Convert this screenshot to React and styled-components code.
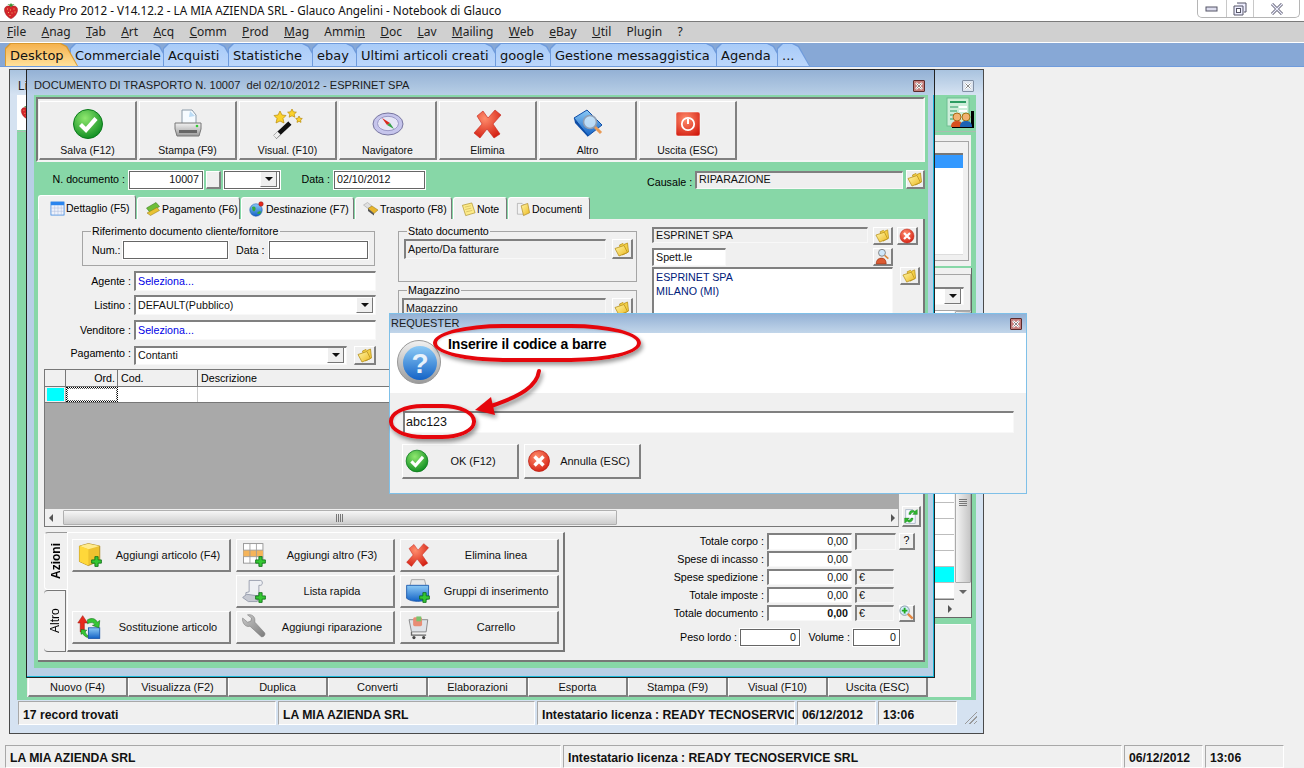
import React from "react";
import styled, { createGlobalStyle } from "styled-components";

const Global = createGlobalStyle`
  html, body { margin: 0; padding: 0; background: #f0f0f0; overflow: hidden; }
  * { box-sizing: border-box; }
`;

const Screen = styled.div`
  position: relative; width: 1304px; height: 768px; display: flex; flex-direction: column;
  overflow: hidden; background: #f0f0f0; color: #000;
  font-family: "Liberation Sans", Arial, sans-serif; font-size: 10.7px; line-height: 1;
`;
const Defs = styled.svg`position: absolute; width: 0; height: 0;`;
const Ico = styled.svg`flex: none; display: block;`;

/* ---------- icons ---------- */
const Gradients = () => (
  <Defs aria-hidden="true">
    <defs>
      <radialGradient id="gGreen" cx="40%" cy="30%" r="75%"><stop offset="0" stopColor="#8fe86f" /><stop offset="1" stopColor="#0a8a1e" /></radialGradient>
      <radialGradient id="gRed" cx="40%" cy="30%" r="80%"><stop offset="0" stopColor="#ff8d6c" /><stop offset="1" stopColor="#d21a0e" /></radialGradient>
      <linearGradient id="gYel" x1="0" y1="0" x2="1" y2="1"><stop offset="0" stopColor="#fff6a8" /><stop offset="1" stopColor="#edb920" /></linearGradient>
      <linearGradient id="gBlue" x1="0" y1="0" x2="0" y2="1"><stop offset="0" stopColor="#8ccaf6" /><stop offset="1" stopColor="#1463c6" /></linearGradient>
      <linearGradient id="gGray" x1="0" y1="0" x2="0" y2="1"><stop offset="0" stopColor="#f2f2f2" /><stop offset="1" stopColor="#9a9a9a" /></linearGradient>
      <linearGradient id="gSteel" x1="0" y1="0" x2="1" y2="1"><stop offset="0" stopColor="#c9c9c9" /><stop offset="1" stopColor="#7c7c7c" /></linearGradient>
    </defs>
  </Defs>
);
const I = ({ s = 32, children }) => <Ico width={s} height={s} viewBox="0 0 32 32">{children}</Ico>;
const Plus = ({ x = 20, y = 20 }) => (
  <path transform={`translate(${x} ${y})`} d="M4 0h4v4h4v4H8v4H4V8H0V4h4z" fill="#35c733" stroke="#0c6a16" strokeWidth="1" />
);
const CheckIcon = ({ s }) => (
  <I s={s}><circle cx="16" cy="16" r="14.5" fill="url(#gGreen)" stroke="#0b7a1c" /><path d="M8.5 16.5l5.5 5.5 10-11.5" fill="none" stroke="#fff" strokeWidth="4.2" /></I>
);
const PrinterIcon = () => (
  <I>
    <path d="M10 2h10l4 5v11H10z" fill="#f6fbff" stroke="#8a9aa8" />
    <path d="M18 3l5 5-6 1z" fill="#bcdcf5" />
    <path d="M3 15h26v6l-2 7H5l-2-7z" fill="url(#gGray)" stroke="#777" />
    <path d="M7 22h18v3H7z" fill="#666" />
    <circle cx="25" cy="18" r="1.3" fill="#3c3" />
  </I>
);
const WandIcon = () => (
  <I>
    <path d="M3 29L18 15" stroke="#111" strokeWidth="4.5" />
    <path d="M3 29l4-4" stroke="#eee" strokeWidth="4.5" />
    <path d="M18 15l3-3" stroke="#eee" strokeWidth="4.5" />
    <path d="M8 3l2 4 4 .5-3 3 1 4.5-4-2-4 2 1-4.5-3-3 4-.5z" fill="#fbd22b" stroke="#b78a0a" strokeWidth=".7" />
    <path d="M20 1l1.4 2.8 3 .4-2.2 2 .6 3-2.8-1.4-2.8 1.4.6-3-2.2-2 3-.4z" fill="#fbd22b" stroke="#b78a0a" strokeWidth=".7" />
    <path d="M27 8l1 2.2 2.3.3-1.7 1.6.4 2.3-2-1.1-2 1.1.4-2.3-1.7-1.6 2.3-.3z" fill="#fbd22b" stroke="#b78a0a" strokeWidth=".7" />
  </I>
);
const CompassIcon = () => (
  <I>
    <ellipse cx="16" cy="16" rx="15" ry="11" fill="#c6c5ec" stroke="#77759f" />
    <ellipse cx="16" cy="15.5" rx="10.5" ry="7.2" fill="#e6e6f6" stroke="#9b99c6" />
    <path d="M10 10l8 5-3 2z" fill="#d9281c" /><path d="M22 21l-7-4 3-2z" fill="#35a04a" />
  </I>
);
const BigXIcon = ({ s }) => (
  <I s={s}><path d="M5 8l6-5 5 7 7-8 6 5-8 9 7 10-6 4-7-9-7 9-6-5 8-9z" fill="url(#gRed)" stroke="#c5241a" strokeWidth=".6" /></I>
);
const BookIcon = () => (
  <I>
    <path d="M2 10L15 2l15 15-14 11z" fill="url(#gBlue)" stroke="#0e4da6" />
    <path d="M2 10l1 5 13 14 0-2z" fill="#0e4da6" />
    <circle cx="18" cy="14" r="6.5" fill="#cfe7fa" fillOpacity=".85" stroke="#8e9eb4" strokeWidth="1.6" />
    <path d="M23 19l6 6" stroke="#e99a55" strokeWidth="3" />
  </I>
);
const PowerIcon = () => (
  <I>
    <rect x="4" y="4" width="24" height="24" rx="2" fill="url(#gRed)" stroke="#fff" strokeWidth=".5" />
    <circle cx="16" cy="16" r="6.2" fill="none" stroke="#fff" strokeWidth="1.8" />
    <path d="M16 11v5" stroke="#fff" strokeWidth="2" />
  </I>
);
const FolderIcon = ({ s = 18 }) => (
  <I s={s}>
    <path d="M11 8l7-3 2 2 7-3 2 18-12 6z" fill="#f3cf45" stroke="#b8901c" strokeWidth="1.6" />
    <path d="M2 15l18-6 7 14-17 7z" fill="url(#gYel)" stroke="#b8901c" strokeWidth="1.6" />
  </I>
);
const RedXIcon = ({ s = 18 }) => (
  <I s={s}>
    <circle cx="16" cy="16" r="14" fill="url(#gRed)" stroke="#b91c10" />
    <path d="M10 10l12 12M22 10L10 22" stroke="#fff" strokeWidth="4.5" />
  </I>
);
const PersonSearchIcon = () => (
  <I s={17}>
    <circle cx="15" cy="9" r="6.5" fill="#cfe7fa" stroke="#777" strokeWidth="1.6" />
    <path d="M20 14l7 6" stroke="#d98a3e" strokeWidth="3" />
    <path d="M4 30c0-7 4-11 10-11s9 4 9 11z" fill="#dc5b32" stroke="#8a2b11" />
  </I>
);
const QuestionIcon = () => (
  <Ico width="44" height="44" viewBox="0 0 44 44">
    <circle cx="22" cy="22" r="21.5" fill="url(#gGray)" stroke="#999" />
    <circle cx="23" cy="23" r="17" fill="url(#gBlue)" />
    <text x="23" y="33" textAnchor="middle" fontFamily="Liberation Sans" fontWeight="700" fontSize="28" fill="#e8f2fb">?</text>
  </Ico>
);
const CubeIcon = ({ s }) => (
  <I s={s}>
    <path d="M14 2l14 3v18l-14 6L3 24V5z" fill="#eec22f" stroke="#a87f10" />
    <path d="M3 5l11 4 14-4-14-3z" fill="#ffeb8c" />
    <path d="M14 9v20L3 24V5z" fill="#ffd83a" />
    <Plus x={18} y={18} />
  </I>
);
const TableIcon = ({ s }) => (
  <I s={s}>
    <rect x="3" y="2" width="24" height="24" fill="#fff" stroke="#888" />
    <rect x="3" y="10" width="24" height="8" fill="#f5b45a" />
    <path d="M3 10h24M3 18h24M11 2v24M19 2v24" stroke="#999" />
    <Plus x={18} y={18} />
  </I>
);
const ScrollIcon = ({ s }) => (
  <I s={s}>
    <path d="M10 3h14c3 0 3 6 0 6l-2 0 0 13H6l0-4 4-1z" fill="#eef0f4" stroke="#8d93a4" />
    <path d="M2 24l5-4 14 2-1 7H9z" fill="#c6c9d2" stroke="#8d93a4" />
    <Plus x={18} y={18} />
  </I>
);
const BucketIcon = ({ s }) => (
  <I s={s}>
    <path d="M8 2l16 0 2 8H6z" fill="#e8e8e8" stroke="#999" />
    <path d="M2 9h27v16c-6 5-21 5-27 0z" fill="url(#gBlue)" stroke="#0e4da6" />
    <Plus x={18} y={18} />
  </I>
);
const SwapIcon = ({ s }) => (
  <I s={s}>
    <path d="M7 2l6 9H9v11H4V11H1z" fill="#e8291c" stroke="#a5180f" strokeWidth=".7" />
    <rect x="14" y="17" width="14" height="13" fill="url(#gBlue)" stroke="#0e4da6" />
    <path d="M13 7c6-3 10-1 12 3l3-2-1 9-8-3 3-1c-2-3-5-3-9-1z" fill="#35c733" stroke="#0c6a16" strokeWidth=".7" />
    <path d="M5 19l7 1-2 2c1 3 2 3 3 4v3c-3-1-5-3-6-5l-2 1z" fill="#35c733" stroke="#0c6a16" strokeWidth=".7" />
  </I>
);
const WrenchIcon = ({ s }) => (
  <I s={s}>
    <path d="M2 5l6 5 4-1 1-4-5-4c5-1 9 2 9 6l0 3 12 13c2 3-3 7-5 4L11 15c-5 2-10-4-9-10z" fill="url(#gSteel)" stroke="#777" strokeWidth=".7" />
  </I>
);
const CartIcon = ({ s }) => (
  <I s={s}>
    <path d="M5 7h23l-2 15H8z" fill="#dfe3e8" stroke="#777" />
    <rect x="10" y="4" width="11" height="11" rx="2" fill="#e88d75" />
    <path d="M14 3h6v6h-6z" fill="#7cc36d" />
    <path d="M8 22v4h18" fill="none" stroke="#666" strokeWidth="1.6" />
    <circle cx="11" cy="29" r="2" fill="#444" /><circle cx="23" cy="29" r="2" fill="#444" />
  </I>
);
const RefreshIcon = () => (
  <I s={17}>
    <path d="M5 3h13l5 5v21H5z" fill="#f7fbff" stroke="#7b8fa9" />
    <path d="M27 3v9h-9l3-3c-3-2-5 0-6 3h-4c0-7 7-10 11-6z" fill="#2fb52f" stroke="#0c6a16" strokeWidth=".6" />
    <path d="M3 28v-9h9l-3 3c3 2 5 0 6-3h4c0 7-7 10-11 6z" fill="#2fb52f" stroke="#0c6a16" strokeWidth=".6" />
  </I>
);
const ZoomPlusIcon = () => (
  <I s={15}>
    <circle cx="12" cy="12" r="10" fill="#d4ecfb" stroke="#8596a5" strokeWidth="2" />
    <path d="M6 12h12M12 6v12" stroke="#1eaa22" strokeWidth="4" />
    <path d="M19 19l10 10" stroke="#e5873f" strokeWidth="5" />
  </I>
);
const StrawberryIcon = ({ s = 16 }) => (
  <I s={s}>
    <path d="M16 7c8-3 14 1 13 8-1 8-8 15-13 16C11 30 4 23 3 15 2 8 8 4 16 7z" fill="#d4252a" stroke="#8d1216" />
    <path d="M16 8L9 2l5 1 2-3 2 3 5-1z" fill="#3d8f30" />
    <path d="M9 12h.1M15 14h.1M22 12h.1M11 19h.1M18 20h.1M24 18h.1M14 25h.1" stroke="#f6d27a" strokeWidth="2" strokeLinecap="round" />
  </I>
);
const CalendarIcon = () => (
  <I s={15}>
    <rect x="2" y="2" width="28" height="28" fill="#eef2fb" stroke="#2b7de0" strokeWidth="1.5" />
    <rect x="2" y="2" width="28" height="7" fill="#2b85ee" />
    <path d="M2 15h28M2 22h28M10 9v21M17 9v21M24 9v21" stroke="#a9b6d8" />
  </I>
);
const MoneyIcon = () => (
  <I s={16}>
    <path d="M3 14L22 3l7 8-19 12z" fill="#6fbe3a" stroke="#2d6e14" />
    <path d="M4 24l20-11 5 6-18 10z" fill="#e8c233" stroke="#8e7410" />
  </I>
);
const GlobeIcon = () => (
  <I s={16}>
    <circle cx="14" cy="18" r="12.5" fill="url(#gBlue)" stroke="#0e4da6" />
    <path d="M6 12c5-3 8 0 7 5s-5 4-6 1zM16 24c3-4 7-4 9-2-2 4-6 6-9 2z" fill="#34a83c" />
    <circle cx="24" cy="6" r="4.5" fill="#e8291c" stroke="#8d1216" />
  </I>
);
const TruckIcon = () => (
  <I s={16}>
    <path d="M1 8l8-5 9 7-8 5z" fill="#e0e0e0" stroke="#999" />
    <path d="M10 15l8-5 12 8-8 7z" fill="#e8b52c" stroke="#8e7410" />
    <path d="M10 15l12 10v4L10 20z" fill="#555" />
  </I>
);
const NoteIcon = () => (
  <I s={15}>
    <path d="M3 7l20-5 7 21-20 6z" fill="#fdeb8a" stroke="#a98d23" strokeWidth="1.4" />
    <path d="M8 11l13-3M9 16l13-3M11 21l13-3" stroke="#b99f44" />
  </I>
);
const FoldersIcon = () => (
  <I s={15}>
    <path d="M3 3h10l3 3v20H3z" fill="#f2f2f2" stroke="#888" />
    <path d="M11 8l14-5 4 20-13 6z" fill="url(#gYel)" stroke="#a9821a" strokeWidth="1.4" />
  </I>
);
const PeopleIcon = () => (
  <Ico width="29" height="32" viewBox="0 0 29 32">
    <rect x="1" y="1" width="22" height="28" fill="#cdeeda" stroke="#6fbe91" />
    <path d="M4 5h16" stroke="#2b9b62" strokeWidth="2" />
    <path d="M4 10h8M4 14h7M4 18h4M4 22h3" stroke="#2b9b62" />
    <path d="M13 10h8M13 14h8" stroke="#fff" strokeWidth="2" />
    <path d="M25 14h3v17H6v-1h19z" fill="#000" />
    <circle cx="11" cy="20" r="4" fill="#f2b271" stroke="#a86a18" />
    <path d="M5 30c0-5 3-6 6-6s6 1 6 6z" fill="#d8501f" />
    <circle cx="20" cy="20" r="4" fill="#f2b271" stroke="#9c7716" />
    <path d="M14 30c0-5 3-6 6-6s6 1 6 6z" fill="#1c63b4" />
  </Ico>
);

/* ---------- window frame pieces ---------- */
const TitleBar = styled.header`
  height: 21px; flex: none; background: #fff; display: flex; justify-content: space-between;
  padding: 0 4px 0 3px; font-family: "Noto Sans", sans-serif; font-size: 11.7px; color: #111;
`;
const TitleLeft = styled.div`display: flex; align-items: center; gap: 3px; height: 21px; white-space: pre;`;
const WinControls = styled.div`
  display: flex; height: 18px; border: 1px solid #b5b5b5; border-top: 0; border-radius: 0 0 5px 5px;
`;
const WinControl = styled.div`
  width: ${p => p.$w}px; display: flex; align-items: center; justify-content: center;
  & + & { border-left: 1px solid #c8c8c8; }
`;
const MenuBar = styled.nav`
  height: 21px; flex: none; display: flex; align-items: center; gap: 15.3px; padding: 0 0 0 7px;
  background: #d0d0d0; border-top: 1px solid #7a7a7a; font-family: "Noto Sans", sans-serif; font-size: 12px; color: #222;
`;
const TabBar = styled.div`
  height: 25px; flex: none; display: flex; align-items: flex-end; padding-left: 5px;
  background: #87a8d6; border-top: 1px solid #fff; border-bottom: 1px solid #6f9bdc;
`;
const TopTab = styled.div`
  position: relative; width: ${p => p.$w}px; margin-right: -8px; height: 23px; padding: 6px 0 0 5px;
  font-family: "DejaVu Sans", sans-serif; font-size: 13px; color: #111; white-space: nowrap; z-index: ${p => p.$active ? 2 : 1};
  clip-path: polygon(0 100%, 0 5px, 5px 0, calc(100% - 17px) 0, calc(100% - 11px) 3px, 100% 100%);
  background: ${p => p.$active ? "#d99a30" : "#6f9bdc"};
  & > span { position: relative; }
  &::before {
    content: ""; position: absolute; inset: 1px 1px 0 1px;
    clip-path: polygon(0 100%, 0 5px, 5px 0, calc(100% - 17px) 0, calc(100% - 11px) 3px, 100% 100%);
    background: ${p => p.$active ? "linear-gradient(#f5b24e, #ffe09a)" : "linear-gradient(#a8cbf8, #bcd6fb)"};
  }
`;
const Desktop = styled.main`position: relative; flex: 1; min-height: 0;`;
const FooterBar = styled.footer`
  height: 23px; flex: none; display: flex; padding-left: 5px; gap: 2px;
`;
const StatusCell = styled.div`
  width: ${p => p.$w}px; flex: none; padding: 6px 0 0 4px; background: #f0f0f0; white-space: nowrap; overflow: hidden;
  border-style: solid; border-width: 1px; border-color: #a8a8a8 #fff #fff #a8a8a8; font-weight: 700; font-size: 12.2px; color: #111;
`;

/* ---------- generic window ---------- */
const Window = styled.section`
  position: absolute; left: ${p => p.$x}px; top: ${p => p.$y}px; width: ${p => p.$w}px; height: ${p => p.$h}px;
  display: flex; flex-direction: column; background: ${p => p.$bg};
  border: 1px solid ${p => p.$line};
  ${p => p.$glow ? "box-shadow: inset -1px -1px 0 #19b6d8;" : ""}
`;
const WinTitle = styled.div`
  height: ${p => p.$h || 25}px; flex: none; display: flex; align-items: center; justify-content: space-between;
  padding: ${p => p.$pt ?? 6}px ${p => p.$pr || 9}px 0 ${p => p.$pl || 7}px;
  background: linear-gradient(${p => p.$from}, ${p => p.$to}); font-size: ${p => p.$fs || 11.1}px; color: #1c1c1c; white-space: pre;
`;
const CloseBtn = styled.div`
  width: ${p => p.$s || 12}px; height: ${p => p.$s || 12}px; display: flex; align-items: center; justify-content: center;
  background: ${p => p.$red ? "#c47d7a" : "#dbe3ee"}; border: 1px solid ${p => p.$red ? "#5c2b2b" : "#8290a5"}; border-radius: 1px;
`;
const CloseGlyph = () => (
  <Ico width="8" height="8" viewBox="0 0 8 8"><path d="M1 1l6 6M7 1L1 7" stroke="#fff" strokeWidth="2.4" /><path d="M1.5 1.5l5 5M6.5 1.5l-5 5" stroke="#555" strokeWidth=".7" /></Ico>
);

/* ---------- back window ---------- */
const BackBody = styled.div`
  height: 605px; margin: 0 7px; flex: none; background: #87d7a7; display: flex; flex-direction: column;
`;
const BackTool = styled.div`
  height: 37px; flex: none; display: flex; justify-content: space-between; align-items: flex-start; border-bottom: 1px solid #a9bdb0; 
`;
const BackLogo = styled.div`width: 40px; height: 35px; background: #fff; padding: 10px 0 0 3px;`;
const BackToolIcon = styled.div`margin: 2px 1px 0 0;`;
const UpperPanel = styled.div`
  margin: 3px 5px 0 12px; height: 131px; flex: none; background: #f0f0f0; padding: 6px 2px 5px 5px;
`;
const UpperFrame = styled.div`height: 100%; border: 1px solid #a5a5a5; padding: 11px 5px 5px 4px;`;
const UpperList = styled.div`height: 100%; background: #fff; border-top: 2px solid #777; border-bottom: 1px solid #ddd;`;
const SelectedRow = styled.div`height: 13px; background: #3399ff;`;
const LowerPanel = styled.div`
  margin: 2px 4px 0 10px; height: 350px; flex: none; background: #f0f0f0; display: flex; flex-direction: column;
  border-right: 1px solid #666; border-bottom: 1px solid #666;
`;
const FilterFrame = styled.div`
  margin-top: 6px; height: 37px; flex: none; border: 1px solid #a5a5a5; display: flex; justify-content: flex-end; align-items: flex-start; padding: 12px 6px 0 0;
`;
const ListWrap = styled.div`flex: 1; display: flex; min-height: 0; gap: 1px;`;
const ListRows = styled.div`flex: 1; background: #fff; border-bottom: 2px solid #777;`;
const ListRow = styled.div`height: 16px; border-bottom: 1px solid #bdbdbd; background: ${p => p.$on ? "#00ffff" : "#fff"};`;
const VScroll = styled.div`width: 16px; flex: none; display: flex; flex-direction: column; background: #f0f0f0;`;
const VThumb = styled.div`
  flex: 1; background: linear-gradient(90deg, #f4f4f4, #c6c6c6); border: 1px solid #aaa; border-radius: 1px;
  display: flex; align-items: flex-end; justify-content: center; padding-bottom: 75px;
`;
const Grip = styled.div`width: ${p => p.$w}px; height: ${p => p.$h}px; background: repeating-linear-gradient(${p => p.$dir}, #777 0 1px, transparent 1px 2px);`;
const ArrowBox = styled.div`
  height: ${p => p.$h || 17}px; flex: none; display: flex; align-items: center; justify-content: center; 
`;
const Tri = styled.div`
  width: 0; height: 0; border-style: solid; border-color: transparent;
  ${p => p.$dir === "down" && `border-width: 4px 4px 0 4px; border-top-color: ${p.$c || "#111"};`}
  ${p => p.$dir === "right" && `border-width: 4px 0 4px 4px; border-left-color: ${p.$c || "#555"};`}
  ${p => p.$dir === "left" && `border-width: 4px 4px 4px 0; border-right-color: ${p.$c || "#555"};`}
`;
const HScrollRow = styled.div`height: 17px; flex: none; display: flex; justify-content: flex-end; padding-right: 19px; align-items: center;`;
const BottomPanel = styled.div`
  margin: 6px 5px 0 10px; height: 73px; flex: none; background: #f0f0f0; border-top: 1px solid #fafafa; border-right: 1px solid #fafafa;
  display: flex; align-items: flex-end; padding-left: 1px;
`;
const CmdBtn = styled.button`
  width: 100px; height: 20px; padding: 2px 0 0; background: #efefef; font: inherit; font-size: 11px; color: #111; text-align: center;
  border-style: solid; border-width: 1px 2px 2px 1px; border-color: #fff #808080 #808080 #fff;
`;
const BackStatus = styled.div`display: flex; gap: 2px; margin: 1px 0 0 8px;`;
const BackCell = styled(StatusCell)`
  height: 24px; padding: 7px 0 0 4px;
`;
const GripCorner = styled.div`
  width: 14px; height: 14px; margin: 9px 0 0 4px;
  background: repeating-linear-gradient(135deg, transparent 0 2px, #999 2px 3px);
  clip-path: polygon(100% 0, 100% 100%, 0 100%);
`;

/* ---------- form atoms ---------- */
const Sunken = styled.div`
  width: ${p => p.$w}px; height: ${p => p.$h || 18}px; flex: none; margin-left: ${p => p.$ml || 0}px;
  background: ${p => p.$gray ? "#efefef" : "#fff"}; color: ${p => p.$blue ? "#0000e6" : "#111"};
  display: flex; align-items: center; justify-content: ${p => p.$right ? "flex-end" : "flex-start"};
  padding: 0 ${p => p.$right ? 3 : 2}px 1px ${p => p.$right ? 0 : 2}px; font-weight: ${p => p.$bold ? 700 : 400}; white-space: nowrap; overflow: hidden;
  border-style: solid; border-width: 2px 1px 1px 2px; border-color: #808080 #f8f8f8 #f8f8f8 #808080;
`;
const Thin = styled(Sunken)`
  border-width: 1px; border-color: #666; outline: 1px solid #fff; outline-offset: 0;
`;
const AddressBox = styled(Sunken)`
  display: block; padding-top: 1px; line-height: 14px; color: #00207a;
`;
const Raised = styled.div`
  width: ${p => p.$w}px; height: ${p => p.$h || 18}px; flex: none; margin-left: ${p => p.$ml || 0}px;
  background: #efefef; display: flex; align-items: center; justify-content: center; 
  border-style: solid; border-width: 1px 2px 2px 1px; border-color: #fff #808080 #808080 #fff;
`;
const ComboBtn = styled(Raised)`
  margin-left: auto; width: 17px; height: 16px; border-width: 1px; border-color: #fff #777 #777 #fff;
`;
const Label = styled.span`
  width: ${p => p.$w}px; flex: none; margin-left: ${p => p.$ml || 0}px; text-align: ${p => p.$left ? "left" : "right"}; white-space: nowrap;
  padding-top: ${p => p.$pt || 0}px; padding-bottom: ${p => p.$pb || 0}px;
`;

/* ---------- front window ---------- */
const FrontBody = styled.div`
  height: 573px; margin: 0 6px 0 7px; flex: none; background: #87d7a7; padding: 2px 3px 0 2px; display: flex; flex-direction: column;
`;
const Toolbar = styled.div`
  height: 65px; flex: none; display: flex; gap: 2px; padding: 2px 1px; background: #efefef;
  border-style: solid; border-width: 2px; border-color: #777 #f5f5f5 #f5f5f5 #777;
`;
const ToolBtn = styled.button`
  width: 98px; height: 59px; padding: 6px 0 3px; background: #efefef; color: #111; font: inherit; font-size: 10.5px;
  display: flex; flex-direction: column; align-items: center; justify-content: space-between;
  border-style: solid; border-width: 1px 2px 2px 1px; border-color: #fff #808080 #808080 #fff;
`;
const DocRow = styled.div`
  margin-top: 8px; height: 19px; flex: none; display: flex; align-items: center; padding: 0 0 0 16px;
`;
const Spacer = styled.div`flex: 1;`;
const TabStrip = styled.div`
  margin: 6px 0 0 2px; height: 24px; flex: none; display: flex; align-items: flex-end; gap: 1px;
`;
const FormTab = styled.div`
  width: ${p => p.$w}px; height: ${p => p.$active ? 24 : 22}px; display: flex; align-items: center; gap: 1px; padding: 1px 0 0 ${p => p.$active ? 11 : 7}px;
  background: #f0f0f0; border: 1px solid #fff; border-bottom: 0; border-right: 1px solid #777; border-radius: 3px 3px 0 0; white-space: nowrap; font-size: 10.5px;
`;
const FormPanel = styled.div`
  margin-left: 2px; width: 887px; height: 443px; flex: none; background: #f0f0f0; display: flex; flex-direction: column; padding: 1px 0 0 6px;
  border-style: solid; border-width: 0 2px 2px 0; border-color: #777;
`;
const FormTop = styled.div`height: 149px; flex: none; display: flex;`;
const LeftCol = styled.div`width: 332px; flex: none; padding-top: 11px;`;
const MidCol = styled.div`width: 239px; flex: none; margin-left: 22px; padding-top: 11px;`;
const RightCol = styled.div`width: 268px; flex: none; margin-left: 15px; padding-top: 7px;`;
const Frame = styled.div`
  position: relative; margin: ${p => p.$m || 0}; width: ${p => p.$w}px; height: ${p => p.$h}px; border: 1px solid #a5a5a5;
  display: flex; align-items: ${p => p.$align || "center"}; padding: ${p => p.$pad || 0};
`;
const FrameTitle = styled.span`
  position: absolute; left: 8px; top: -6px; background: #f0f0f0; padding: 0 1px; white-space: nowrap;
`;
const FormRow = styled.div`
  display: flex; align-items: center; margin-top: ${p => p.$mt}px; height: ${p => p.$h || 20}px; gap: 3px;
`;
const RightRow = styled.div`display: flex; align-items: flex-start; margin-top: ${p => p.$mt || 0}px;`;
const GridArea = styled.div`display: flex; align-items: flex-end; gap: 3px;`;
const DataGrid = styled.div`
  width: 855px; height: 158px; flex: none; display: flex; flex-direction: column; border: 1px solid #777; border-right-color: #aaa; background: #f0f0f0;
`;
const GridLine = styled.div`
  display: grid; grid-template-columns: 21px 52px 80px 1fr; height: ${p => p.$h}px; flex: none; background: #fff; border-bottom: 1px solid #777;
`;
const HeadCell = styled.div`
  background: #f0f0f0; border-right: 1px solid #777; display: flex; align-items: center; justify-content: ${p => p.$right ? "flex-end" : "flex-start"}; padding: 0 2px 0 3px;
`;
const RowHead = styled.div`background: #f0f0f0; border-right: 1px solid #aaa; padding: 1px 1px 1px 2px;`;
const RowMark = styled.div`height: 100%; background: #00ffff;`;
const FocusCell = styled.div`border: 1px dotted #000; outline: 1px dotted #555; outline-offset: -2px;`;
const PlainCell = styled.div`border-right: 1px solid #ccc;`;
const GrayArea = styled.div`flex: 1; background: #a9a9a9;`;
const HScroll = styled.div`
  height: 17px; flex: none; display: flex; align-items: center; padding: 0 3px 0 4px; background: #f0f0f0; gap: 10px;
`;
const HThumb = styled.div`
  width: 554px; height: 15px; flex: none; background: linear-gradient(#f6f6f6, #cdcdcd); border: 1px solid #b0b0b0; border-radius: 1px;
  display: flex; align-items: center; justify-content: center;
`;
const FormBottom = styled.div`display: flex; margin-top: 5px;`;
const ActionWrap = styled.div`width: 521px; height: 120px; flex: none; display: flex;`;
const SideTabs = styled.div`width: 23px; flex: none; display: flex; flex-direction: column;`;
const SideTab = styled.div`
  height: ${p => p.$h}px; display: flex; align-items: center; justify-content: center; writing-mode: vertical-rl; transform: rotate(180deg);
  font-weight: ${p => p.$active ? 700 : 400}; background: #f0f0f0;
  border-style: solid; border-color: #777; border-width: ${p => p.$active ? "0" : "1px 0 1px 1px"}; border-radius: 0 4px 4px 0;
  ${p => p.$active ? "border-right: 1px solid #fff; border-top: 1px solid #fff; border-bottom:1px solid #999;" : "margin-right: 1px;"}
  font-size: 12px;
`;
const ActionPanel = styled.div`
  flex: 1; display: grid; grid-template-columns: repeat(3, 159px); grid-auto-rows: 33px; column-gap: 5px; row-gap: 3px; align-content: start;
  padding: 6px 0 0 4px; border-style: solid; border-width: 1px 2px 2px 1px; border-color: #fff #777 #777 #fff;
`;
const ActionBtn = styled.button`
  grid-column: ${p => p.$col}; grid-row: ${p => p.$row}; display: flex; align-items: center; padding: 0 0 0 4px; background: #efefef; font: inherit; font-size: 11px; color: #111;
  border-style: solid; border-width: 1px 2px 2px 1px; border-color: #fff #808080 #808080 #fff; white-space: nowrap; min-width: 0;
`;
const ActionIcon = styled.span`width: 30px; flex: none; display: block;`;
const ActionLabel = styled.span`flex: 1; text-align: center; font-size: 11px;`;
const Totals = styled.div`margin: 1px 0 0 75px; display: flex; flex-direction: column; gap: 2px;`;
const TotalRow = styled.div`display: flex; align-items: center; height: 16px;`;
const WeightRow = styled.div`display: flex; align-items: center; height: 17px; margin-top: 6px; padding-left: 40px;`;

/* ---------- dialog ---------- */
const DialogWhite = styled.div`height: 60px; flex: none; background: #fff; display: flex; align-items: flex-start; padding: 7px 0 0 7px; gap: 7px;`;
const Prompt = styled.div`margin-top: -3px; font-size: 14px; font-weight: 700; letter-spacing: -.1px;`;
const DialogBottom = styled.div`flex: 1; padding: 18px 0 0 12px;`;
const DialogBtns = styled.div`display: flex; gap: 5px; margin-top: 11px;`;
const DialogBtn = styled.button`
  width: 117px; height: 35px; padding: 0 0 0 2px; display: flex; align-items: center; background: #efefef; font: inherit; color: #111;
  border-style: solid; border-width: 1px 2px 2px 1px; border-color: #fff #808080 #808080 #fff;
`;
const DialogInput = styled(Sunken)`margin-left: 1px; font-size: 12.5px; padding-left: 1px;`;
const Ring = styled.div`
  position: absolute; left: ${p => p.$x}px; top: ${p => p.$y}px; width: ${p => p.$w}px; height: ${p => p.$h}px;
  border: 4px solid #e5060c; border-radius: ${p => p.$r}; box-shadow: 2px 3px 4px rgba(0,0,0,.4), inset 1px 1px 2px rgba(0,0,0,.12); pointer-events: none;
`;
const ArrowLayer = styled.svg`
  position: absolute; left: 75px; top: 50px; filter: drop-shadow(2px 3px 2px rgba(0,0,0,.4)); pointer-events: none;
`;

const Folder = ({ w = 19, h = 19, ml, s = 16 }) => <Raised $w={w} $h={h} $ml={ml}><FolderIcon s={s} /></Raised>;

const menu = [["F", "ile"], ["A", "nag"], ["T", "ab"], ["A", "rt"], ["A", "cq"], ["C", "omm"], ["P", "rod"], ["M", "ag"], ["Ammi", "n", 1], ["D", "oc"], ["L", "av"], ["M", "ailing"], ["W", "eb"], ["e", "Bay"], ["U", "til"], ["", "Plugin", 2], ["", "?", 2]];
const topTabs = [["Desktop", 73, 1], ["Commerciale", 101], ["Acquisti", 73], ["Statistiche", 92], ["ebay", 52], ["Ultimi articoli creati", 147], ["google", 63], ["Gestione messaggistica", 174], ["Agenda", 69], ["...", 33]];
const tools = [
  [<CheckIcon />, "Salva (F12)"], [<PrinterIcon />, "Stampa (F9)"], [<WandIcon />, "Visual. (F10)"], [<CompassIcon />, "Navigatore"],
  [<BigXIcon />, "Elimina"], [<BookIcon />, "Altro"], [<PowerIcon />, "Uscita (ESC)"],
];
const formTabs = [[<CalendarIcon />, "Dettaglio (F5)", 98, 1], [<MoneyIcon />, "Pagamento (F6)", 103], [<GlobeIcon />, "Destinazione (F7)", 113], [<TruckIcon />, "Trasporto (F8)", 97], [<NoteIcon />, "Note", 54], [<FoldersIcon />, "Documenti", 82]];
const actions = [
  [1, 1, CubeIcon, "Aggiungi articolo (F4)"], [2, 1, TableIcon, "Aggiungi altro (F3)"], [3, 1, BigXIcon, "Elimina linea"],
  [2, 2, ScrollIcon, "Lista rapida"], [3, 2, BucketIcon, "Gruppi di inserimento"],
  [1, 3, SwapIcon, "Sostituzione articolo"], [2, 3, WrenchIcon, "Aggiungi riparazione"], [3, 3, CartIcon, "Carrello"],
];
const cmds = ["Nuovo (F4)", "Visualizza (F2)", "Duplica", "Converti", "Elaborazioni", "Esporta", "Stampa (F9)", "Visual (F10)", "Uscita (ESC)"];

export default function App() {
  return (
    <Screen>
      <Global />
      <Gradients />
      <TitleBar>
        <TitleLeft><StrawberryIcon />Ready Pro 2012 - V14.12.2 - LA MIA AZIENDA SRL - Glauco Angelini - Notebook di Glauco</TitleLeft>
        <WinControls>
          <WinControl $w={28}><Ico width="14" height="8" viewBox="0 0 14 8"><rect x="1" y="2" width="11" height="4" fill="#dde" stroke="#556" /></Ico></WinControl>
          <WinControl $w={27}><Ico width="14" height="14" viewBox="0 0 14 14"><path d="M4 1h9v9h-2M1 4h9v9H1z" fill="#eef" stroke="#556" /><rect x="3.5" y="6.5" width="4" height="4" fill="#fff" stroke="#556" /></Ico></WinControl>
          <WinControl $w={46}><Ico width="14" height="12" viewBox="0 0 14 12"><path d="M2 1l10 10M12 1L2 11" stroke="#667" strokeWidth="3" /><path d="M2 1l10 10M12 1L2 11" stroke="#eef" strokeWidth="1.2" /></Ico></WinControl>
        </WinControls>
      </TitleBar>
      <MenuBar>
        {menu.map(([a, b, k], i) => (
          <span key={i}>{k === 2 ? b : k === 1 ? <>{a}<u>{b}</u></> : <><u>{a}</u>{b}</>}</span>
        ))}
      </MenuBar>
      <TabBar>
        {topTabs.map(([t, w, active]) => <TopTab key={t} $w={w} $active={active}><span>{t}</span></TopTab>)}
      </TabBar>

      <Desktop>
        <Window $x={9} $y={2} $w={975} $h={665} $bg="#d5e2f1" $line="#4a4a4a">
          <WinTitle $from="#a9c3df" $to="#d6e3f2" $pl={8} $fs={12}>
            <span>Li</span>
            <CloseBtn><CloseGlyph /></CloseBtn>
          </WinTitle>
          <BackBody>
            <BackTool>
              <BackLogo><StrawberryIcon s={14} /></BackLogo>
              <BackToolIcon><PeopleIcon /></BackToolIcon>
            </BackTool>
            <UpperPanel>
              <UpperFrame><UpperList><SelectedRow /></UpperList></UpperFrame>
            </UpperPanel>
            <LowerPanel>
              <FilterFrame><Sunken $w={120} $h={18}><ComboBtn><Tri $dir="down" /></ComboBtn></Sunken></FilterFrame>
              <ListWrap>
                <ListRows>
                  {Array.from({ length: 18 }, (_, i) => <ListRow key={i} $on={i === 16} />)}
                </ListRows>
                <VScroll>
                  <VThumb><Grip $w={8} $h={8} $dir="180deg" /></VThumb>
                  <ArrowBox $h={17}><Tri $dir="down" $c="#666" /></ArrowBox>
                </VScroll>
              </ListWrap>
              <HScrollRow><Tri $dir="right" /></HScrollRow>
            </LowerPanel>
            <BottomPanel>
              {cmds.map(c => <CmdBtn key={c}>{c}</CmdBtn>)}
            </BottomPanel>
          </BackBody>
          <BackStatus>
            <BackCell $w={258}>17 record trovati</BackCell>
            <BackCell $w={257}>LA MIA AZIENDA SRL</BackCell>
            <BackCell $w={258}>Intestatario licenza : READY TECNOSERVIC</BackCell>
            <BackCell $w={79}>06/12/2012</BackCell>
            <BackCell $w={79}>13:06</BackCell>
            <GripCorner />
          </BackStatus>
        </Window>

        <Window $x={26} $y={2} $w={909} $h={609} $bg="#b8cfe6" $line="#222" $glow>
          <WinTitle $from="#94b1d5" $to="#b8cfe6">
            <span>{"DOCUMENTO DI TRASPORTO N. 10007  del 02/10/2012 - ESPRINET SPA"}</span>
            <CloseBtn $red><CloseGlyph /></CloseBtn>
          </WinTitle>
          <FrontBody>
            <Toolbar>
              {tools.map(([ic, t]) => <ToolBtn key={t}>{ic}<span>{t}</span></ToolBtn>)}
            </Toolbar>
            <DocRow>
              <Label $w={73}>N. documento :</Label>
              <Thin $w={74} $ml={4} $h={18} $right>10007</Thin>
              <Raised $w={15} $h={18} $ml={3} />
              <Thin $w={56} $ml={3} $h={18}><ComboBtn><Tri $dir="down" /></ComboBtn></Thin>
              <Label $w={29} $ml={21}>Data :</Label>
              <Thin $w={91} $ml={4} $h={18}>02/10/2012</Thin>
              <Spacer />
              <Label $w={43} $pt={5}>Causale :</Label>
              <Sunken $w={208} $ml={5} $gray>RIPARAZIONE</Sunken>
              <Folder ml={3} />
            </DocRow>
            <TabStrip>
              {formTabs.map(([ic, t, w, a]) => <FormTab key={t} $w={w} $active={a}>{ic}<span>{t}</span></FormTab>)}
            </TabStrip>
            <FormPanel>
              <FormTop>
                <LeftCol>
                  <Frame $m="0 0 0 38px" $w={293} $h={35} $pad="3px 0 0 9px">
                    <FrameTitle>Riferimento documento cliente/fornitore</FrameTitle>
                    <Label $w={28} $left>Num.:</Label>
                    <Thin $w={105} $ml={3} $h={18} />
                    <Label $w={29} $ml={8} $left>Data :</Label>
                    <Thin $w={99} $ml={4} $h={18} />
                  </Frame>
                  <FormRow $mt={5}><Label $w={87}>Agente :</Label><Sunken $w={242} $h={20} $blue>Seleziona...</Sunken></FormRow>
                  <FormRow $mt={4}><Label $w={87}>Listino :</Label><Sunken $w={242} $h={20}>DEFAULT(Pubblico)<ComboBtn><Tri $dir="down" /></ComboBtn></Sunken></FormRow>
                  <FormRow $mt={5}><Label $w={87}>Venditore :</Label><Sunken $w={242} $h={20} $blue>Seleziona...</Sunken></FormRow>
                  <FormRow $mt={5}><Label $w={87} $pb={4}>Pagamento :</Label><Sunken $w={213} $h={19}>Contanti<ComboBtn><Tri $dir="down" /></ComboBtn></Sunken><Folder w={22} h={19} ml={4} /></FormRow>
                </LeftCol>
                <MidCol>
                  <Frame $w={239} $h={51} $align="flex-start" $pad="7px 0 0 5px">
                    <FrameTitle>Stato documento</FrameTitle>
                    <Sunken $w={202} $h={20} $gray>Aperto/Da fatturare</Sunken>
                    <Folder w={21} h={20} ml={6} />
                  </Frame>
                  <Frame $m="8px 0 0" $w={239} $h={60} $align="flex-start" $pad="7px 0 0 3px">
                    <FrameTitle>Magazzino</FrameTitle>
                    <Sunken $w={204} $h={20} $gray>Magazzino</Sunken>
                    <Folder w={21} h={20} ml={6} />
                  </Frame>
                </MidCol>
                <RightCol>
                  <RightRow>
                    <Sunken $w={216} $h={16} $gray>ESPRINET SPA</Sunken>
                    <Folder w={20} h={18} ml={5} s={15} />
                    <Raised $w={21} $h={18} $ml={4}><RedXIcon s={16} /></Raised>
                  </RightRow>
                  <RightRow $mt={3}>
                    <Sunken $w={74} $h={18}>Spett.le</Sunken>
                    <Raised $w={20} $h={18} $ml={147}><PersonSearchIcon /></Raised>
                  </RightRow>
                  <RightRow $mt={1}>
                    <AddressBox $w={241} $h={70}>ESPRINET SPA<br />MILANO (MI)</AddressBox>
                    <Folder w={20} h={18} ml={7} s={15} />
                  </RightRow>
                </RightCol>
              </FormTop>
              <GridArea>
                <DataGrid>
                  <GridLine $h={17}>
                    <HeadCell />
                    <HeadCell $right>Ord.</HeadCell>
                    <HeadCell>Cod.</HeadCell>
                    <HeadCell>Descrizione</HeadCell>
                  </GridLine>
                  <GridLine $h={16}>
                    <RowHead><RowMark /></RowHead>
                    <FocusCell />
                    <PlainCell />
                    <PlainCell />
                  </GridLine>
                  <GrayArea />
                  <HScroll>
                    <Tri $dir="left" />
                    <HThumb><Grip $w={8} $h={8} $dir="90deg" /></HThumb>
                    <Spacer />
                    <Tri $dir="right" />
                  </HScroll>
                </DataGrid>
                <Raised $w={19} $h={21}><RefreshIcon /></Raised>
              </GridArea>
              <FormBottom>
                <ActionWrap>
                  <SideTabs>
                    <SideTab $h={58} $active>Azioni</SideTab>
                    <SideTab $h={62}>Altro</SideTab>
                  </SideTabs>
                  <ActionPanel>
                    {actions.map(([c, r, Ic, t]) => (
                      <ActionBtn key={t} $col={c} $row={r}><ActionIcon><Ic s={26} /></ActionIcon><ActionLabel>{t}</ActionLabel></ActionBtn>
                    ))}
                  </ActionPanel>
                </ActionWrap>
                <Totals>
                  <TotalRow><Label $w={124}>Totale corpo :</Label><Sunken $w={85} $h={17} $ml={3} $right>0,00</Sunken><Sunken $w={41} $h={17} $ml={3} $gray /><Raised $w={16} $h={17} $ml={3}>?</Raised></TotalRow>
                  <TotalRow><Label $w={124}>Spese di incasso :</Label><Sunken $w={85} $h={16} $ml={3} $right>0,00</Sunken></TotalRow>
                  <TotalRow><Label $w={124}>Spese spedizione :</Label><Sunken $w={85} $h={16} $ml={3} $right>0,00</Sunken><Sunken $w={39} $h={16} $ml={3} $gray>€</Sunken></TotalRow>
                  <TotalRow><Label $w={124}>Totale imposte :</Label><Sunken $w={85} $h={16} $ml={3} $right>0,00</Sunken><Sunken $w={39} $h={16} $ml={3} $gray>€</Sunken></TotalRow>
                  <TotalRow><Label $w={124}>Totale documento :</Label><Sunken $w={85} $h={16} $ml={3} $right $bold>0,00</Sunken><Sunken $w={39} $h={16} $ml={3} $gray>€</Sunken><Raised $w={16} $h={17} $ml={5}><ZoomPlusIcon /></Raised></TotalRow>
                  <WeightRow>
                    <Label $w={56}>Peso lordo :</Label>
                    <Thin $w={60} $h={17} $ml={4} $right>0</Thin>
                    <Label $w={42} $ml={8}>Volume :</Label>
                    <Thin $w={47} $h={17} $ml={3} $right>0</Thin>
                  </WeightRow>
                </Totals>
              </FormBottom>
            </FormPanel>
          </FrontBody>
        </Window>

        <Window $x={389} $y={246} $w={638} $h={181} $bg="#f0f0f0" $line="#7fc0e8">
          <WinTitle $h={19} $from="#94b1d5" $to="#c2d6ea" $pt={0} $pl={1} $pr={4} $fs={11}>
            <span>REQUESTER</span>
            <CloseBtn $red><CloseGlyph /></CloseBtn>
          </WinTitle>
          <DialogWhite>
            <QuestionIcon />
            <Prompt>Inserire il codice a barre</Prompt>
          </DialogWhite>
          <DialogBottom>
            <DialogInput $w={611} $h={22}>abc123</DialogInput>
            <DialogBtns>
              <DialogBtn><CheckIcon s={24} /><ActionLabel>OK (F12)</ActionLabel></DialogBtn>
              <DialogBtn><RedXIcon s={24} /><ActionLabel>Annulla (ESC)</ActionLabel></DialogBtn>
            </DialogBtns>
          </DialogBottom>
          <Ring $x={43} $y={10} $w={208} $h={38} $r="70px / 19px" />
          <Ring $x={-1} $y={90} $w={87} $h={35} $r="34px / 17px" />
          <ArrowLayer width="90" height="60" viewBox="0 0 90 60">
            <path d="M74 7C72 22 56 32 26 42" fill="none" stroke="#e5060c" strokeWidth="4" strokeLinecap="round" />
            <path d="M10 46l16-13 4 18z" fill="#e5060c" />
          </ArrowLayer>
        </Window>
      </Desktop>

      <FooterBar>
        <StatusCell $w={556}>LA MIA AZIENDA SRL</StatusCell>
        <StatusCell $w={559}>Intestatario licenza : READY TECNOSERVICE SRL</StatusCell>
        <StatusCell $w={79}>06/12/2012</StatusCell>
        <StatusCell $w={79}>13:06</StatusCell>
      </FooterBar>
    </Screen>
  );
}
